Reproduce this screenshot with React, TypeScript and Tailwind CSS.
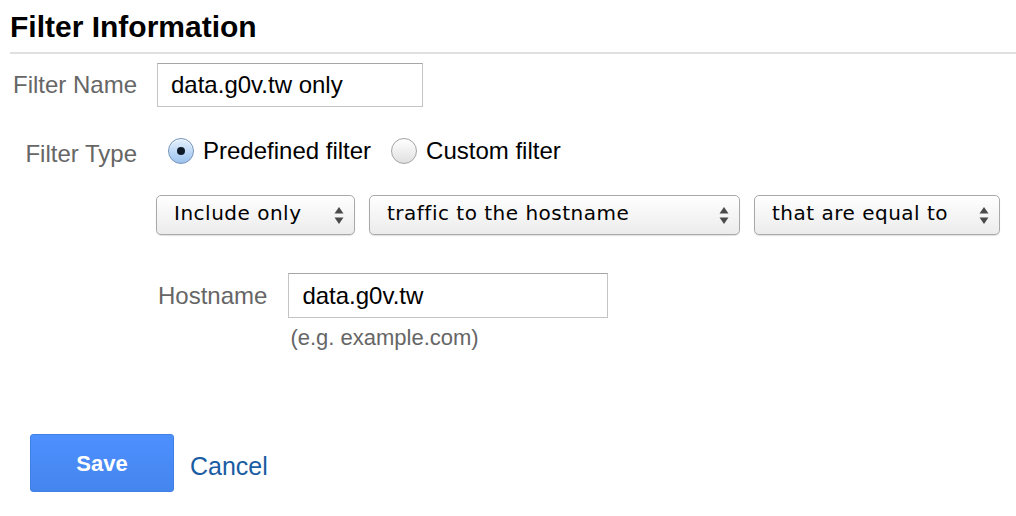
import React, { FunctionComponent } from 'react'

const Radio: FunctionComponent<{ checked?: boolean, label: string }> = ({ checked, label }) => {
    return (
        <div className="flex items-center gap-[9px]">
            {checked ? (
                <span className="w-[26px] h-[26px] rounded-full border border-[#7393bb] bg-gradient-to-b from-[#e4f0fd] to-[#9cc2ee] shadow-[inset_0_1px_1px_rgba(255,255,255,0.8)] flex items-center justify-center">
                    <span className="w-[8px] h-[8px] rounded-full bg-[#0f1a28]" />
                </span>
            ) : (
                <span className="w-[26px] h-[26px] rounded-full border border-[#a3a3a3] bg-gradient-to-b from-[#ffffff] to-[#e0e0e0]" />
            )}
            <span className="text-[24px] leading-[28px] text-black">{label}</span>
        </div>
    )
}

const Select: FunctionComponent<{ value: string, width: string }> = ({ value, width }) => {
    return (
        <div
            className={`${width} h-[40px] flex items-center justify-between pl-[17px] pr-[10px] rounded-[5px] border border-[#a9a9a9] bg-gradient-to-b from-[#ffffff] to-[#ececec] shadow-[0_1px_1px_rgba(0,0,0,0.12)]`}
        >
            <span className="mb-[5px] font-['DejaVu_Sans',sans-serif] text-[20px] tracking-[0.5px] text-black leading-none">{value}</span>
            <svg width="10" height="19" viewBox="0 0 10 19" className="shrink-0">
                <path d="M5 1 L9.5 7.5 L0.5 7.5 Z" fill="#4a4a4a" />
                <path d="M5 18 L9.5 11.5 L0.5 11.5 Z" fill="#4a4a4a" />
            </svg>
        </div>
    )
}

const App: FunctionComponent = () => {
    return (
        <div className="w-[1016px] h-[516px] bg-white pl-[10px] font-['Liberation_Sans',Arial,sans-serif] overflow-hidden">
            <h1 className="pt-[10px] text-[30px] leading-[34px] font-bold text-black">Filter Information</h1>
            <div className="mt-[8px] h-[2px] bg-[#e0e0e0]" />

            {/* Filter Name */}
            <div className="mt-[9px] flex items-center">
                <span className="w-[127px] text-right text-[24px] leading-[28px] text-[#666666]">Filter Name</span>
                <div className="ml-[20px] w-[266px] h-[44px] flex items-center pl-[13px] border border-[#c4c4c4] border-t-[#a6a6a6] text-[24px] text-black">
                    data.g0v.tw only
                </div>
            </div>

            {/* Filter Type */}
            <div className="mt-[31px] flex items-start">
                <span className="w-[127px] mt-[2px] text-right text-[24px] leading-[28px] text-[#666666]">Filter Type</span>
                <div className="ml-[31px] flex items-center gap-[20px] h-[26px]">
                    <Radio checked label="Predefined filter" />
                    <Radio label="Custom filter" />
                </div>
            </div>

            {/* Condition selects */}
            <div className="mt-[27px] ml-[146px] flex items-center gap-[14px]">
                <Select value="Include only" width="w-[199px]" />
                <Select value="traffic to the hostname" width="w-[371px]" />
                <Select value="that are equal to" width="w-[246px]" />
            </div>

            {/* Hostname */}
            <div className="mt-[38px] ml-[148px] flex items-start">
                <span className="h-[45px] flex items-center text-[24px] text-[#666666]">Hostname</span>
                <div className="ml-[21px] flex flex-col">
                    <div className="w-[320px] h-[45px] flex items-center pl-[13px] border border-[#c4c4c4] border-t-[#a6a6a6] text-[24px] text-black">
                        data.g0v.tw
                    </div>
                    <span className="mt-[7px] ml-[2px] text-[22px] leading-[26px] text-[#666666]">(e.g. example.com)</span>
                </div>
            </div>

            {/* Actions */}
            <div className="mt-[83px] ml-[20px] flex items-center">
                <button
                    type="button"
                    className="w-[144px] h-[58px] rounded-[3px] border border-[#3f7fe6] bg-gradient-to-b from-[#4d90fe] to-[#4585ee] text-white text-[22px] font-bold"
                >
                    Save
                </button>
                <a className="ml-[16px] mt-[8px] text-[25px] text-[#1b5ca3] cursor-pointer">Cancel</a>
            </div>
        </div>
    )
}

export default App
